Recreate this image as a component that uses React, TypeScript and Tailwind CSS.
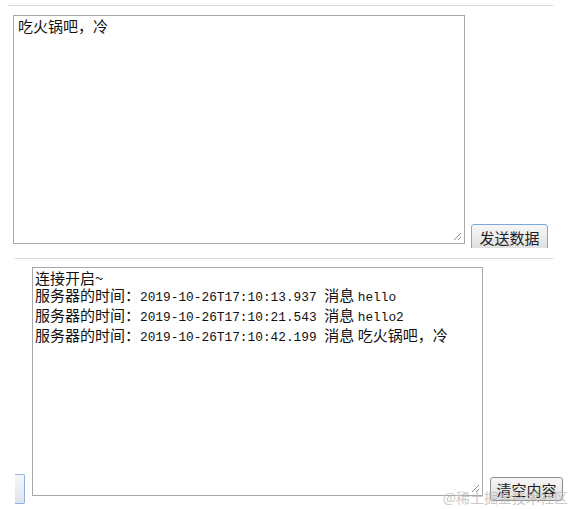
const cjk = "font-['Noto_Sans_CJK_SC','Noto_Sans',sans-serif]";
const mono = "font-['Liberation_Mono','Noto_Sans_CJK_SC',monospace]";

const logs = [
  { time: "2019-10-26T17:10:13.937", msg: "hello" },
  { time: "2019-10-26T17:10:21.543", msg: "hello2" },
  { time: "2019-10-26T17:10:42.199", msg: "吃火锅吧，冷" },
];

function Grip() {
  return (
    <svg
      className="absolute right-[2px] bottom-[2px]"
      width="10"
      height="10"
      viewBox="0 0 10 10"
    >
      <path d="M9 2 L2 9 M9 6 L6 9" stroke="#8a8a8a" strokeWidth="1" />
    </svg>
  );
}

function Button({ label, focused }: { label: string; focused?: boolean }) {
  return (
    <div
      className={`flex items-center justify-center rounded-[3px] border bg-gradient-to-b from-[#f7f7f7] to-[#dedede] text-[15px] leading-none text-[#1e1e1e] ${cjk} ${
        focused ? "border-[#7ea7dc]" : "border-[#8e8e8e]"
      }`}
      style={{ width: "100%", height: "100%" }}
    >
      {label}
    </div>
  );
}

export default function App() {
  return (
    <div className="relative w-[574px] h-[509px] overflow-hidden bg-white">
      <div className="pt-[5px]">
        <div className="ml-[8px] w-[545px] h-px bg-[#d6d6d6]" />
      </div>

      <div className="mt-[9px] ml-[13px] flex items-start">
        <div className="relative w-[452px] h-[229px] border border-[#a8a8a8] bg-white">
          <p className={`pl-[4px] pt-px text-[15px] leading-[17px] text-[#111] ${cjk}`}>
            吃火锅吧，冷
          </p>
          <Grip />
        </div>
        <div className="ml-[6px] mt-[209px] w-[77px] h-[24px] overflow-hidden">
          <div className="w-[77px] h-[27px]">
            <Button label="发送数据" focused />
          </div>
        </div>
      </div>

      <div className="mt-[10px] ml-[15px] w-[538px] h-px bg-[#d6d6d6]" />

      <div className="mt-[8px] flex items-start">
        <div className="ml-[15px] mt-[207px] w-[10px] h-[30px] rounded-r-[2px] border border-l-0 border-[#8fb0de] bg-gradient-to-b from-[#f4f6f9] to-[#dfe4ec]" />
        <div className="relative ml-[7px] w-[451px] h-[229px] border border-[#a8a8a8] bg-white">
          <div className="pl-[2px] pt-px text-[15px] leading-[17px] text-[#111]">
            <div className={cjk}>连接开启~</div>
            {logs.map((l) => (
              <div key={l.time} className="whitespace-pre">
                <span className={cjk}>服务器的时间：</span>
                <span className={`${mono} text-[12.8px]`}>{l.time} </span>
                <span className={cjk}>消息 </span>
                {/[a-z]/.test(l.msg) ? (
                  <span className={`${mono} text-[12.8px]`}>{l.msg}</span>
                ) : (
                  <span className={cjk}>{l.msg}</span>
                )}
              </div>
            ))}
          </div>
          <Grip />
        </div>
        <div className="ml-[7px] mt-[210px] w-[73px] h-[24px]">
          <Button label="清空内容" />
        </div>
      </div>

      <div
        className={`absolute right-[6px] bottom-[5px] text-[14px] leading-none text-[#bdbdbd] opacity-80 ${cjk}`}
      >
        @稀土掘金技术社区
      </div>
    </div>
  );
}
